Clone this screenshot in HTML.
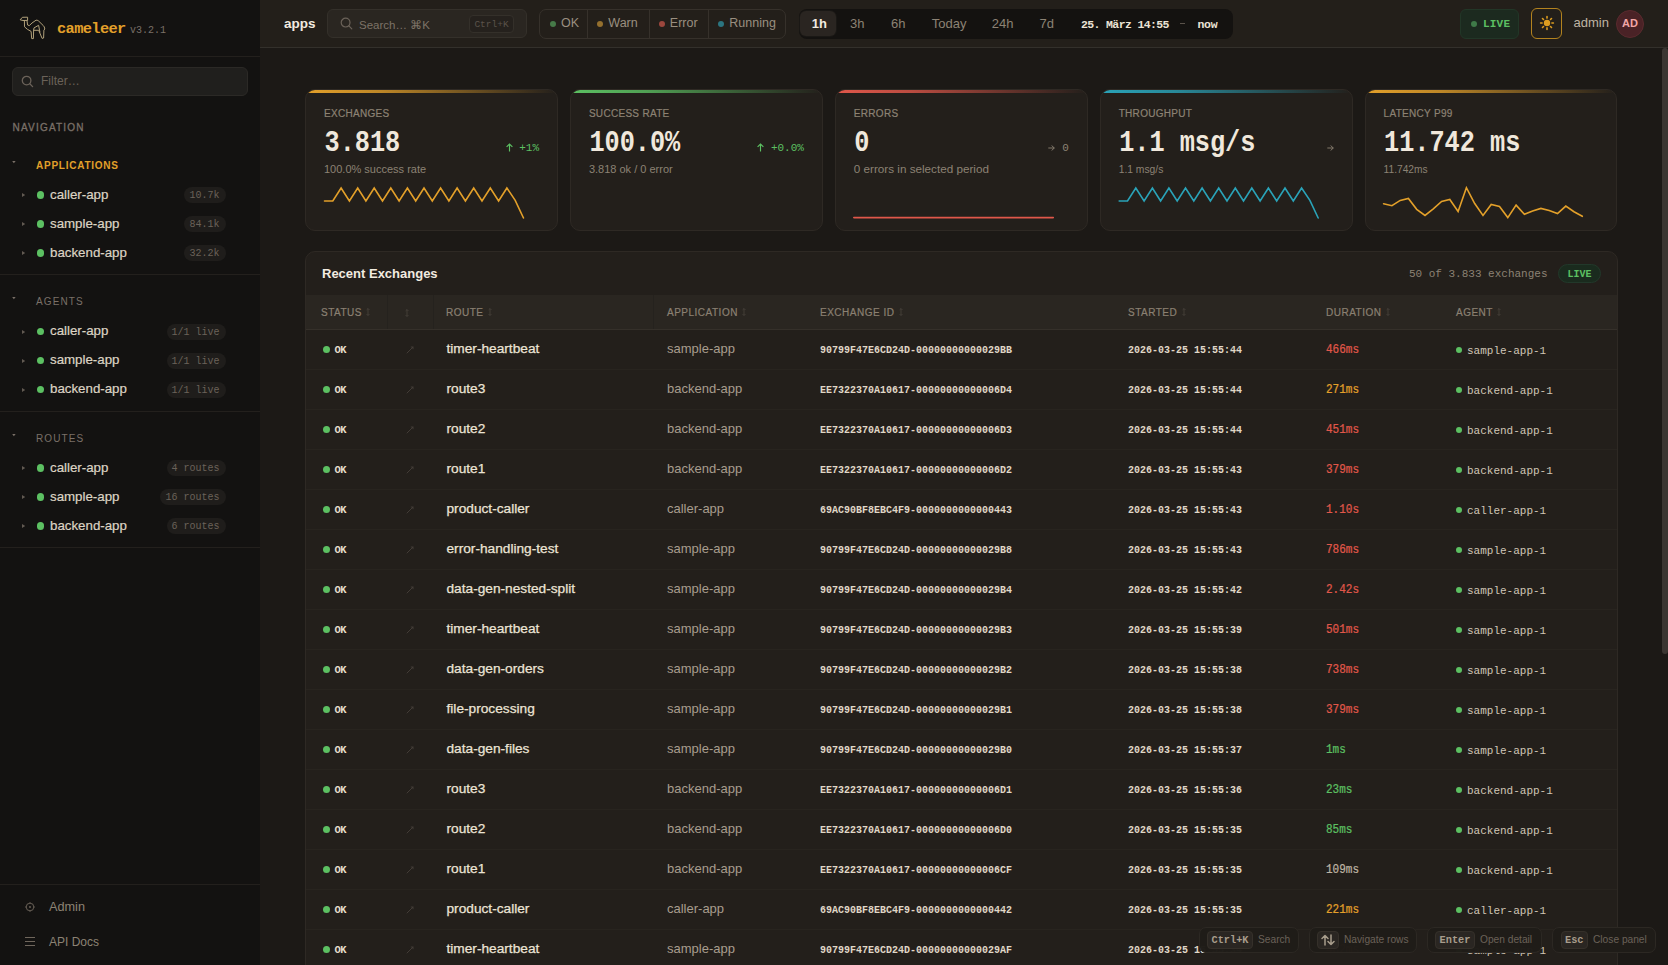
<!DOCTYPE html>
<html><head><meta charset="utf-8"><title>cameleer</title>
<style>
html,body{margin:0;padding:0;width:1668px;height:965px;overflow:hidden;background:#1c1916;}
.r,.t{position:absolute;}
.t{white-space:nowrap;}
.card{background:#231f1b;border:1px solid #2e2924;border-radius:10px;box-sizing:border-box;overflow:hidden;}
.card .bar{position:absolute;left:0;top:0;right:0;height:3px;}
</style></head><body>
<div class="r" style="left:0px;top:0px;width:260px;height:965px;background:#131211;"></div>
<svg class="r" style="left:16px;top:14px" width="34" height="28" viewBox="16 14 34 28" fill="none" stroke="#b8a880" stroke-width="0.95" stroke-linejoin="round" stroke-linecap="round">
<path d="M20.4 19.5 L22.4 17.3 L27.6 17.2 L27.6 20.4 L23.4 20.5 Z"/>
<path d="M24.4 20.6 L24.5 26.8 Q27 29.5 31.1 31.4 L31.7 38.6 L33.4 38.6 L33.6 30.3 L38.7 30.3 L42.1 38.4 L43.6 38 L43.9 30.2 L44.8 29 Q44.5 26.5 43.3 25.6 L38.6 21 Q37 19.8 36 20.2 L32 23 L29.3 25.6 L27.6 25 L27 20.5"/>
<path d="M33.6 30.3 L34 27.9 L38.6 25.3 L39.9 32"/>
</svg>
<div class="t" style="top:18.93px;font-size:15.3px;line-height:20px;color:#e3a02a;font-weight:700;font-family:'Liberation Mono', monospace;letter-spacing:-0.6px;left:57px;">cameleer</div>
<div class="t" style="top:23.84px;font-size:10px;line-height:13px;color:#7a7068;font-weight:400;font-family:'Liberation Mono', monospace;left:130px;">v3.2.1</div>
<div class="r" style="left:0px;top:56px;width:260px;height:1px;background:#23201d;"></div>
<div class="r" style="left:12px;top:67px;width:236px;height:29px;background:#201f1d;border:1px solid #2b2926;box-sizing:border-box;border-radius:6px;"></div>
<svg class="r" style="left:21px;top:75px" width="13" height="13" viewBox="0 0 13 13" fill="none" stroke="#6b6259" stroke-width="1.3"><circle cx="5.6" cy="5.6" r="4.3"/><path d="M8.8 8.8 L11.6 11.6" stroke-linecap="round"/></svg>
<div class="t" style="top:72.84px;font-size:12px;line-height:16px;color:#6b6259;font-weight:400;font-family:'Liberation Sans', sans-serif;left:41px;">Filter&#8230;</div>
<div class="t" style="top:121.44px;font-size:10px;line-height:13px;color:#7a7068;font-weight:400;font-family:'Liberation Sans', sans-serif;letter-spacing:1.2px;left:12.5px;-webkit-text-stroke:0.3px #7a7068;">NAVIGATION</div>
<svg class="r" style="left:12.2px;top:160.7px" width="4" height="3" viewBox="0 0 4 3"><path d="M0.2 0 L3.6 0 L1.9 2.2 Z" fill="#7a7068"/></svg>
<div class="t" style="top:159.03px;font-size:10px;line-height:13px;color:#e3a02a;font-weight:700;font-family:'Liberation Sans', sans-serif;letter-spacing:0.75px;left:36px;">APPLICATIONS</div>
<svg class="r" style="left:21.8px;top:193px" width="4" height="4" viewBox="0 0 4 4"><path d="M0 0 L3.2 2 L0 4 Z" fill="#625a52"/></svg>
<div class="r" style="left:36.5px;top:191.2px;width:7.6px;height:7.6px;background:#5cc062;border-radius:3.8px;"></div>
<div class="t" style="top:185.89px;font-size:13.3px;line-height:17px;color:#ddd4c4;font-weight:500;font-family:'Liberation Sans', sans-serif;left:50px;-webkit-text-stroke:0.2px #ddd4c4;">caller-app</div>
<div class="r" style="left:184px;top:187px;width:42px;height:16px;background:#1f1d1b;border-radius:8px;"></div>
<div class="t" style="top:189.34px;font-size:10px;line-height:13px;color:#6b6259;font-weight:400;font-family:'Liberation Mono', monospace;right:1448.5px;">10.7k</div>
<svg class="r" style="left:21.8px;top:222px" width="4" height="4" viewBox="0 0 4 4"><path d="M0 0 L3.2 2 L0 4 Z" fill="#625a52"/></svg>
<div class="r" style="left:36.5px;top:220.2px;width:7.6px;height:7.6px;background:#5cc062;border-radius:3.8px;"></div>
<div class="t" style="top:214.89px;font-size:13.3px;line-height:17px;color:#ddd4c4;font-weight:500;font-family:'Liberation Sans', sans-serif;left:50px;-webkit-text-stroke:0.2px #ddd4c4;">sample-app</div>
<div class="r" style="left:184px;top:216px;width:42px;height:16px;background:#1f1d1b;border-radius:8px;"></div>
<div class="t" style="top:218.34px;font-size:10px;line-height:13px;color:#6b6259;font-weight:400;font-family:'Liberation Mono', monospace;right:1448.5px;">84.1k</div>
<svg class="r" style="left:21.8px;top:251px" width="4" height="4" viewBox="0 0 4 4"><path d="M0 0 L3.2 2 L0 4 Z" fill="#625a52"/></svg>
<div class="r" style="left:36.5px;top:249.2px;width:7.6px;height:7.6px;background:#5cc062;border-radius:3.8px;"></div>
<div class="t" style="top:243.89px;font-size:13.3px;line-height:17px;color:#ddd4c4;font-weight:500;font-family:'Liberation Sans', sans-serif;left:50px;-webkit-text-stroke:0.2px #ddd4c4;">backend-app</div>
<div class="r" style="left:184px;top:245px;width:42px;height:16px;background:#1f1d1b;border-radius:8px;"></div>
<div class="t" style="top:247.34px;font-size:10px;line-height:13px;color:#6b6259;font-weight:400;font-family:'Liberation Mono', monospace;right:1448.5px;">32.2k</div>
<div class="r" style="left:0px;top:274px;width:260px;height:1px;background:#23201d;"></div>
<svg class="r" style="left:12.2px;top:296.9px" width="4" height="3" viewBox="0 0 4 3"><path d="M0.2 0 L3.6 0 L1.9 2.2 Z" fill="#7a7068"/></svg>
<div class="t" style="top:295.24px;font-size:10px;line-height:13px;color:#7a7068;font-weight:400;font-family:'Liberation Sans', sans-serif;letter-spacing:1.1px;left:36px;">AGENTS</div>
<svg class="r" style="left:21.8px;top:329.5px" width="4" height="4" viewBox="0 0 4 4"><path d="M0 0 L3.2 2 L0 4 Z" fill="#625a52"/></svg>
<div class="r" style="left:36.5px;top:327.7px;width:7.6px;height:7.6px;background:#5cc062;border-radius:3.8px;"></div>
<div class="t" style="top:322.39px;font-size:13.3px;line-height:17px;color:#ddd4c4;font-weight:500;font-family:'Liberation Sans', sans-serif;left:50px;-webkit-text-stroke:0.2px #ddd4c4;">caller-app</div>
<div class="r" style="left:167px;top:323.5px;width:59px;height:16px;background:#1f1d1b;border-radius:8px;"></div>
<div class="t" style="top:325.84px;font-size:10px;line-height:13px;color:#6b6259;font-weight:400;font-family:'Liberation Mono', monospace;right:1448.5px;">1/1 live</div>
<svg class="r" style="left:21.8px;top:358.5px" width="4" height="4" viewBox="0 0 4 4"><path d="M0 0 L3.2 2 L0 4 Z" fill="#625a52"/></svg>
<div class="r" style="left:36.5px;top:356.7px;width:7.6px;height:7.6px;background:#5cc062;border-radius:3.8px;"></div>
<div class="t" style="top:351.39px;font-size:13.3px;line-height:17px;color:#ddd4c4;font-weight:500;font-family:'Liberation Sans', sans-serif;left:50px;-webkit-text-stroke:0.2px #ddd4c4;">sample-app</div>
<div class="r" style="left:167px;top:352.5px;width:59px;height:16px;background:#1f1d1b;border-radius:8px;"></div>
<div class="t" style="top:354.84px;font-size:10px;line-height:13px;color:#6b6259;font-weight:400;font-family:'Liberation Mono', monospace;right:1448.5px;">1/1 live</div>
<svg class="r" style="left:21.8px;top:387.5px" width="4" height="4" viewBox="0 0 4 4"><path d="M0 0 L3.2 2 L0 4 Z" fill="#625a52"/></svg>
<div class="r" style="left:36.5px;top:385.7px;width:7.6px;height:7.6px;background:#5cc062;border-radius:3.8px;"></div>
<div class="t" style="top:380.39px;font-size:13.3px;line-height:17px;color:#ddd4c4;font-weight:500;font-family:'Liberation Sans', sans-serif;left:50px;-webkit-text-stroke:0.2px #ddd4c4;">backend-app</div>
<div class="r" style="left:167px;top:381.5px;width:59px;height:16px;background:#1f1d1b;border-radius:8px;"></div>
<div class="t" style="top:383.84px;font-size:10px;line-height:13px;color:#6b6259;font-weight:400;font-family:'Liberation Mono', monospace;right:1448.5px;">1/1 live</div>
<div class="r" style="left:0px;top:411px;width:260px;height:1px;background:#23201d;"></div>
<svg class="r" style="left:12.2px;top:434.0px" width="4" height="3" viewBox="0 0 4 3"><path d="M0.2 0 L3.6 0 L1.9 2.2 Z" fill="#7a7068"/></svg>
<div class="t" style="top:432.34px;font-size:10px;line-height:13px;color:#7a7068;font-weight:400;font-family:'Liberation Sans', sans-serif;letter-spacing:1.1px;left:36px;">ROUTES</div>
<svg class="r" style="left:21.8px;top:466px" width="4" height="4" viewBox="0 0 4 4"><path d="M0 0 L3.2 2 L0 4 Z" fill="#625a52"/></svg>
<div class="r" style="left:36.5px;top:464.2px;width:7.6px;height:7.6px;background:#5cc062;border-radius:3.8px;"></div>
<div class="t" style="top:458.89px;font-size:13.3px;line-height:17px;color:#ddd4c4;font-weight:500;font-family:'Liberation Sans', sans-serif;left:50px;-webkit-text-stroke:0.2px #ddd4c4;">caller-app</div>
<div class="r" style="left:167px;top:460px;width:59px;height:16px;background:#1f1d1b;border-radius:8px;"></div>
<div class="t" style="top:462.34px;font-size:10px;line-height:13px;color:#6b6259;font-weight:400;font-family:'Liberation Mono', monospace;right:1448.5px;">4 routes</div>
<svg class="r" style="left:21.8px;top:495px" width="4" height="4" viewBox="0 0 4 4"><path d="M0 0 L3.2 2 L0 4 Z" fill="#625a52"/></svg>
<div class="r" style="left:36.5px;top:493.2px;width:7.6px;height:7.6px;background:#5cc062;border-radius:3.8px;"></div>
<div class="t" style="top:487.89px;font-size:13.3px;line-height:17px;color:#ddd4c4;font-weight:500;font-family:'Liberation Sans', sans-serif;left:50px;-webkit-text-stroke:0.2px #ddd4c4;">sample-app</div>
<div class="r" style="left:160px;top:489px;width:66px;height:16px;background:#1f1d1b;border-radius:8px;"></div>
<div class="t" style="top:491.34px;font-size:10px;line-height:13px;color:#6b6259;font-weight:400;font-family:'Liberation Mono', monospace;right:1448.5px;">16 routes</div>
<svg class="r" style="left:21.8px;top:524px" width="4" height="4" viewBox="0 0 4 4"><path d="M0 0 L3.2 2 L0 4 Z" fill="#625a52"/></svg>
<div class="r" style="left:36.5px;top:522.2px;width:7.6px;height:7.6px;background:#5cc062;border-radius:3.8px;"></div>
<div class="t" style="top:516.89px;font-size:13.3px;line-height:17px;color:#ddd4c4;font-weight:500;font-family:'Liberation Sans', sans-serif;left:50px;-webkit-text-stroke:0.2px #ddd4c4;">backend-app</div>
<div class="r" style="left:167px;top:518px;width:59px;height:16px;background:#1f1d1b;border-radius:8px;"></div>
<div class="t" style="top:520.34px;font-size:10px;line-height:13px;color:#6b6259;font-weight:400;font-family:'Liberation Mono', monospace;right:1448.5px;">6 routes</div>
<div class="r" style="left:0px;top:547px;width:260px;height:1px;background:#23201d;"></div>
<div class="r" style="left:0px;top:884px;width:260px;height:1px;background:#23201d;"></div>
<svg class="r" style="left:24px;top:901px" width="12" height="12" viewBox="0 0 12 12" fill="none" stroke="#6f665c" stroke-width="0.9"><circle cx="6" cy="6" r="3.8"/><circle cx="6" cy="6" r="0.9" fill="#6f665c" stroke="none"/><path d="M6 1.2V2.2 M6 9.8V10.8 M1.2 6H2.2 M9.8 6H10.8"/></svg>
<div class="t" style="top:899.10px;font-size:12.7px;line-height:17px;color:#8c8274;font-weight:400;font-family:'Liberation Sans', sans-serif;left:49px;">Admin</div>
<svg class="r" style="left:25px;top:936px" width="10" height="11" viewBox="0 0 10 11" stroke="#6f665c" stroke-width="1"><path d="M0 1.5H10 M0 5.5H10 M0 9.5H10"/></svg>
<div class="t" style="top:933.64px;font-size:12px;line-height:16px;color:#8c8274;font-weight:400;font-family:'Liberation Sans', sans-serif;left:49px;">API Docs</div>
<div class="r" style="left:260px;top:0px;width:1408px;height:47px;background:#231f1a;"></div>
<div class="r" style="left:260px;top:47px;width:1408px;height:1px;background:#33302b;"></div>
<div class="t" style="top:14.62px;font-size:13.5px;line-height:18px;color:#f2ebe0;font-weight:700;font-family:'Liberation Sans', sans-serif;left:284px;">apps</div>
<div class="r" style="left:327px;top:9px;width:200px;height:29px;background:#2a2621;border:1px solid #34302a;box-sizing:border-box;border-radius:6px;"></div>
<svg class="r" style="left:340px;top:17px" width="13" height="13" viewBox="0 0 13 13" fill="none" stroke="#6b6259" stroke-width="1.2"><circle cx="5.6" cy="5.6" r="4.4"/><path d="M8.9 8.9 L11.8 11.8" stroke-linecap="round"/></svg>
<div class="t" style="top:17.82px;font-size:11.5px;line-height:15px;color:#7d7367;font-weight:400;font-family:'Liberation Sans', sans-serif;left:359px;">Search&#8230; &#8984;K</div>
<div class="r" style="left:469px;top:15px;width:45px;height:18px;background:#25211d;border:1px solid #34302a;box-sizing:border-box;border-radius:4px;"></div>
<div class="t" style="top:18.97px;font-size:9.5px;line-height:12px;color:#5a524a;font-weight:400;font-family:'Liberation Mono', monospace;right:1176.5px;left:469px;width:45px;text-align:center;">Ctrl+K</div>
<div class="r" style="left:539px;top:9px;width:247px;height:30px;background:none;border:1px solid #36312b;box-sizing:border-box;border-radius:7px;"></div>
<div class="r" style="left:587px;top:10px;width:1px;height:28px;background:#36312b;"></div>
<div class="r" style="left:649px;top:10px;width:1px;height:28px;background:#36312b;"></div>
<div class="r" style="left:708px;top:10px;width:1px;height:28px;background:#36312b;"></div>
<div class="r" style="left:549.7px;top:20.5px;width:6px;height:6px;background:#467a48;border-radius:3px;"></div>
<div class="t" style="top:15.17px;font-size:12.5px;line-height:16px;color:#9a8f80;font-weight:400;font-family:'Liberation Sans', sans-serif;left:561.0px;">OK</div>
<div class="r" style="left:597px;top:20.5px;width:6px;height:6px;background:#94702e;border-radius:3px;"></div>
<div class="t" style="top:15.17px;font-size:12.5px;line-height:16px;color:#9a8f80;font-weight:400;font-family:'Liberation Sans', sans-serif;left:608.3px;">Warn</div>
<div class="r" style="left:658.5px;top:20.5px;width:6px;height:6px;background:#9c473d;border-radius:3px;"></div>
<div class="t" style="top:15.17px;font-size:12.5px;line-height:16px;color:#9a8f80;font-weight:400;font-family:'Liberation Sans', sans-serif;left:669.8px;">Error</div>
<div class="r" style="left:718px;top:20.5px;width:6px;height:6px;background:#2b7580;border-radius:3px;"></div>
<div class="t" style="top:15.17px;font-size:12.5px;line-height:16px;color:#9a8f80;font-weight:400;font-family:'Liberation Sans', sans-serif;left:729.3px;">Running</div>
<div class="r" style="left:798.5px;top:9px;width:434px;height:30px;background:#141210;border-radius:8px;"></div>
<div class="r" style="left:799.5px;top:11px;width:36px;height:25px;background:#2a2521;border-radius:6px;box-shadow:0 0 0 1px #1a1815;"></div>
<div class="t" style="top:15.30px;font-size:13px;line-height:17px;color:#f2ebe0;font-weight:700;font-family:'Liberation Sans', sans-serif;left:811.8px;">1h</div>
<div class="t" style="top:15.30px;font-size:13px;line-height:17px;color:#8c8274;font-weight:400;font-family:'Liberation Sans', sans-serif;left:850px;">3h</div>
<div class="t" style="top:15.30px;font-size:13px;line-height:17px;color:#8c8274;font-weight:400;font-family:'Liberation Sans', sans-serif;left:891px;">6h</div>
<div class="t" style="top:15.30px;font-size:13px;line-height:17px;color:#8c8274;font-weight:400;font-family:'Liberation Sans', sans-serif;left:931.8px;">Today</div>
<div class="t" style="top:15.30px;font-size:13px;line-height:17px;color:#8c8274;font-weight:400;font-family:'Liberation Sans', sans-serif;left:991.8px;">24h</div>
<div class="t" style="top:15.30px;font-size:13px;line-height:17px;color:#8c8274;font-weight:400;font-family:'Liberation Sans', sans-serif;left:1039.6px;">7d</div>
<div class="t" style="top:16.94px;font-size:11.5px;line-height:15px;color:#ece4d6;font-weight:700;font-family:'Liberation Mono', monospace;letter-spacing:-0.63px;left:1081px;">25. M&auml;rz 14:55</div>
<div class="r" style="left:1180px;top:23px;width:5px;height:1px;background:#5a524a;"></div>
<div class="t" style="top:16.94px;font-size:11.5px;line-height:15px;color:#ece4d6;font-weight:700;font-family:'Liberation Mono', monospace;letter-spacing:-0.3px;left:1197.5px;">now</div>
<div class="r" style="left:1460px;top:9px;width:59px;height:30px;background:#1c2a1f;border:1px solid #223627;box-sizing:border-box;border-radius:6px;"></div>
<div class="r" style="left:1470.5px;top:20.5px;width:6px;height:6px;background:#3f7a48;border-radius:3px;"></div>
<div class="t" style="top:17.27px;font-size:11px;line-height:14px;color:#5cc062;font-weight:700;font-family:'Liberation Mono', monospace;letter-spacing:0.2px;left:1483px;">LIVE</div>
<div class="r" style="left:1531px;top:8px;width:31px;height:31px;background:none;border:1px solid #b3831f;box-sizing:border-box;border-radius:6px;"></div>
<svg class="r" style="left:1537.7px;top:14.2px" width="18" height="18" viewBox="-9 -9 18 18"><circle cx="0" cy="0" r="3.2" fill="#dd9d20"/><g stroke="#dd9d20" stroke-width="1.6" stroke-linecap="round"><path d="M0 -4.9V-6.4 M0 4.9V6.4 M-4.9 0H-6.4 M4.9 0H6.4 M-3.5 -3.5L-4.5 -4.5 M3.5 3.5L4.5 4.5 M-3.5 3.5L-4.5 4.5 M3.5 -3.5L4.5 -4.5"/></g></svg>
<div class="t" style="top:14.00px;font-size:13px;line-height:17px;color:#bfb4a4;font-weight:400;font-family:'Liberation Sans', sans-serif;left:1573.5px;">admin</div>
<div class="r" style="left:1616px;top:9.5px;width:28px;height:28px;background:#4a2226;border-radius:14px;border:1px solid #5a2a2e;box-sizing:border-box;"></div>
<div class="t" style="top:16.39px;font-size:11px;line-height:14px;color:#f2a6a6;font-weight:700;font-family:'Liberation Sans', sans-serif;right:38px;left:1616px;width:28px;text-align:center;">AD</div>
<div class="r" style="left:260px;top:48px;width:1402px;height:917px;background:#1c1916;"></div>
<div class="r" style="left:1662px;top:48px;width:6px;height:606px;background:#3b3632;border-radius:3px;"></div>
<div class="r card" style="left:305.0px;top:89px;width:252.9px;height:142px;"><div class="bar" style="background:linear-gradient(90deg,#e3a02a 0%,#e3a02acc 30%,#e3a02a00 100%);"></div></div>
<div class="t" style="top:107.33px;font-size:10px;line-height:13px;color:#8c8274;font-weight:500;font-family:'Liberation Sans', sans-serif;letter-spacing:0.3px;left:324.0px;-webkit-text-stroke:0.2px #8c8274;">EXCHANGES</div>
<div class="t" style="top:128.17px;font-size:25.3px;line-height:33px;color:#f0e8dc;font-weight:700;font-family:'Liberation Mono', monospace;letter-spacing:-0.05px;left:324.5px;transform:scaleY(1.14);transform-origin:0 23.23px;">3.818</div>
<div class="t" style="top:141.07px;font-size:11px;line-height:14px;color:#5cc062;font-weight:400;font-family:'Liberation Mono', monospace;right:1129.0px;"><svg width="7" height="9" viewBox="0 0 7 9" style="vertical-align:-0.5px;margin-right:6.5px"><path d="M3.5 8.5V1 M0.6 3.9L3.5 1L6.4 3.9" fill="none" stroke="currentColor" stroke-width="1.15"/></svg>+1%</div>
<div class="t" style="top:162.19px;font-size:11px;line-height:14px;color:#8c8274;font-weight:400;font-family:'Liberation Sans', sans-serif;left:324.0px;">100.0% success rate</div>
<svg class="r" style="left:0;top:0" width="1668" height="965"><polyline points="324.5,201 332.8,201 341.1,188 349.4,201 357.7,188 365.9,201 374.2,188 382.5,201 390.8,188 399.1,201 407.4,188 415.7,201 424.0,188 432.3,201 440.6,188 448.9,201 457.1,188 465.4,201 473.7,188 482.0,201 490.3,188 498.6,201 506.9,188 515.2,200.3 523.5,218" fill="none" stroke="#e3a02a" stroke-width="1.6" stroke-linejoin="miter" stroke-linecap="round"/></svg>
<div class="r card" style="left:569.9px;top:89px;width:252.9px;height:142px;"><div class="bar" style="background:linear-gradient(90deg,#5cc062 0%,#5cc062cc 30%,#5cc06200 100%);"></div></div>
<div class="t" style="top:107.33px;font-size:10px;line-height:13px;color:#8c8274;font-weight:500;font-family:'Liberation Sans', sans-serif;letter-spacing:0.3px;left:588.9px;-webkit-text-stroke:0.2px #8c8274;">SUCCESS RATE</div>
<div class="t" style="top:128.17px;font-size:25.3px;line-height:33px;color:#f0e8dc;font-weight:700;font-family:'Liberation Mono', monospace;letter-spacing:-0.05px;left:589.4px;transform:scaleY(1.14);transform-origin:0 23.23px;">100.0%</div>
<div class="t" style="top:141.07px;font-size:11px;line-height:14px;color:#5cc062;font-weight:400;font-family:'Liberation Mono', monospace;right:864.1px;"><svg width="7" height="9" viewBox="0 0 7 9" style="vertical-align:-0.5px;margin-right:6.5px"><path d="M3.5 8.5V1 M0.6 3.9L3.5 1L6.4 3.9" fill="none" stroke="currentColor" stroke-width="1.15"/></svg>+0.0%</div>
<div class="t" style="top:162.19px;font-size:11px;line-height:14px;color:#8c8274;font-weight:400;font-family:'Liberation Sans', sans-serif;left:588.9px;">3.818 ok / 0 error</div>
<div class="r card" style="left:834.8px;top:89px;width:252.9px;height:142px;"><div class="bar" style="background:linear-gradient(90deg,#e0574a 0%,#e0574acc 30%,#e0574a00 100%);"></div></div>
<div class="t" style="top:107.33px;font-size:10px;line-height:13px;color:#8c8274;font-weight:500;font-family:'Liberation Sans', sans-serif;letter-spacing:0.3px;left:853.8px;-webkit-text-stroke:0.2px #8c8274;">ERRORS</div>
<div class="t" style="top:128.17px;font-size:25.3px;line-height:33px;color:#f0e8dc;font-weight:700;font-family:'Liberation Mono', monospace;letter-spacing:-0.05px;left:854.3px;transform:scaleY(1.14);transform-origin:0 23.23px;">0</div>
<div class="t" style="top:141.07px;font-size:11px;line-height:14px;color:#8c8274;font-weight:400;font-family:'Liberation Mono', monospace;right:599.2px;"><svg width="7" height="6" viewBox="0 0 7 6" style="vertical-align:0.5px;margin-right:7px"><path d="M0.3 3H6.3 M3.6 0.5L6.3 3L3.6 5.5" fill="none" stroke="currentColor" stroke-width="0.9"/></svg>0</div>
<div class="t" style="top:161.45px;font-size:11.7px;line-height:15px;color:#8c8274;font-weight:400;font-family:'Liberation Sans', sans-serif;left:853.8px;">0 errors in selected period</div>
<svg class="r" style="left:0;top:0" width="1668" height="965"><polyline points="853.8,217.6 1053.3,217.6" fill="none" stroke="#e0574a" stroke-width="1.6" stroke-linejoin="miter" stroke-linecap="round"/></svg>
<div class="r card" style="left:1099.7px;top:89px;width:252.9px;height:142px;"><div class="bar" style="background:linear-gradient(90deg,#2aa3b8 0%,#2aa3b8cc 30%,#2aa3b800 100%);"></div></div>
<div class="t" style="top:107.33px;font-size:10px;line-height:13px;color:#8c8274;font-weight:500;font-family:'Liberation Sans', sans-serif;letter-spacing:0.3px;left:1118.6999999999998px;-webkit-text-stroke:0.2px #8c8274;">THROUGHPUT</div>
<div class="t" style="top:128.17px;font-size:25.3px;line-height:33px;color:#f0e8dc;font-weight:700;font-family:'Liberation Mono', monospace;letter-spacing:-0.05px;left:1119.1999999999998px;transform:scaleY(1.14);transform-origin:0 23.23px;">1.1 msg/s</div>
<div class="t" style="top:141.07px;font-size:11px;line-height:14px;color:#8c8274;font-weight:400;font-family:'Liberation Mono', monospace;right:334.3000000000002px;"><svg width="7" height="6" viewBox="0 0 7 6" style="vertical-align:0.5px;margin-right:0"><path d="M0.3 3H6.3 M3.6 0.5L6.3 3L3.6 5.5" fill="none" stroke="currentColor" stroke-width="0.9"/></svg></div>
<div class="t" style="top:162.93px;font-size:10.3px;line-height:13px;color:#8c8274;font-weight:400;font-family:'Liberation Sans', sans-serif;left:1118.6999999999998px;">1.1 msg/s</div>
<svg class="r" style="left:0;top:0" width="1668" height="965"><polyline points="1119.2,201 1127.5,201 1135.8,188 1144.1,201 1152.4,188 1160.6,201 1168.9,188 1177.2,201 1185.5,188 1193.8,201 1202.1,188 1210.4,201 1218.7,188 1227.0,201 1235.3,188 1243.5,201 1251.8,188 1260.1,201 1268.4,188 1276.7,201 1285.0,188 1293.3,201 1301.6,188 1309.9,200.3 1318.2,218" fill="none" stroke="#2aa3b8" stroke-width="1.6" stroke-linejoin="miter" stroke-linecap="round"/></svg>
<div class="r card" style="left:1364.6px;top:89px;width:252.9px;height:142px;"><div class="bar" style="background:linear-gradient(90deg,#e3a02a 0%,#e3a02acc 30%,#e3a02a00 100%);"></div></div>
<div class="t" style="top:107.33px;font-size:10px;line-height:13px;color:#8c8274;font-weight:500;font-family:'Liberation Sans', sans-serif;letter-spacing:0.3px;left:1383.6px;-webkit-text-stroke:0.2px #8c8274;">LATENCY P99</div>
<div class="t" style="top:128.17px;font-size:25.3px;line-height:33px;color:#f0e8dc;font-weight:700;font-family:'Liberation Mono', monospace;letter-spacing:-0.05px;left:1384.1px;transform:scaleY(1.14);transform-origin:0 23.23px;">11.742 ms</div>
<div class="t" style="top:162.97px;font-size:10.2px;line-height:13px;color:#8c8274;font-weight:400;font-family:'Liberation Sans', sans-serif;left:1383.6px;">11.742ms</div>
<svg class="r" style="left:0;top:0" width="1668" height="965"><polyline points="1383.6,203.7 1391.9,205.7 1400.2,200.4 1408.4,198.5 1416.7,209.3 1425.0,215.4 1433.3,208.8 1441.6,201.4 1449.8,199.5 1458.1,211.4 1466.4,187.7 1474.7,203.5 1483.0,215.4 1491.2,204.4 1499.5,206.4 1507.8,217.6 1516.1,205.1 1524.4,214.3 1532.6,211 1540.9,208.4 1549.2,210.6 1557.5,213.6 1565.8,206.1 1574.0,211.7 1582.3,216.3" fill="none" stroke="#e3a02a" stroke-width="1.6" stroke-linejoin="miter" stroke-linecap="round"/></svg>
<div class="r" style="left:305px;top:251px;width:1313px;height:760px;background:#231f1b;border:1px solid #2e2924;border-radius:10px;box-sizing:border-box;"></div>
<div class="t" style="top:265.00px;font-size:13px;line-height:17px;color:#f2ebe0;font-weight:700;font-family:'Liberation Sans', sans-serif;left:322px;">Recent Exchanges</div>
<div class="t" style="top:266.87px;font-size:11px;line-height:14px;color:#8c8274;font-weight:400;font-family:'Liberation Mono', monospace;right:120.5px;">50 of 3.833 exchanges</div>
<div class="r" style="left:1558px;top:264px;width:43px;height:19px;background:#1a2b1e;border:1px solid #22382a;box-sizing:border-box;border-radius:10px;"></div>
<div class="t" style="top:267.64px;font-size:10px;line-height:13px;color:#5cc062;font-weight:700;font-family:'Liberation Mono', monospace;right:88.5px;left:1558px;width:43px;text-align:center;">LIVE</div>
<div class="r" style="left:306px;top:295px;width:1311px;height:34px;background:#2a2621;"></div>
<div class="r" style="left:306px;top:329px;width:1311px;height:1px;background:#35302a;"></div>
<div class="r" style="left:387px;top:295px;width:1px;height:34px;background:#25221e;"></div>
<div class="r" style="left:433px;top:295px;width:1px;height:34px;background:#25221e;"></div>
<div class="r" style="left:653px;top:295px;width:1px;height:34px;background:#25221e;"></div>
<div class="t" style="top:305.74px;font-size:10px;line-height:13px;color:#8a8072;font-weight:400;font-family:'Liberation Sans', sans-serif;letter-spacing:0.5px;left:321px;-webkit-text-stroke:0.2px #8a8072;">STATUS<svg width="4" height="8" viewBox="0 0 4 8" style="margin-left:4.5px;vertical-align:-0.5px"><path d="M2 0.5V7.5 M0.6 1.9L2 0.5L3.4 1.9 M0.6 6.1L2 7.5L3.4 6.1" stroke="#4a443d" stroke-width="0.8" fill="none"/></svg></div>
<svg class="r" style="left:405px;top:309px" width="4" height="8" viewBox="0 0 4 8"><path d="M2 0.5V7.5 M0.6 1.9L2 0.5L3.4 1.9 M0.6 6.1L2 7.5L3.4 6.1" stroke="#4a443d" stroke-width="0.8" fill="none"/></svg>
<div class="t" style="top:305.74px;font-size:10px;line-height:13px;color:#8a8072;font-weight:400;font-family:'Liberation Sans', sans-serif;letter-spacing:0.5px;left:446px;-webkit-text-stroke:0.2px #8a8072;">ROUTE<svg width="4" height="8" viewBox="0 0 4 8" style="margin-left:4.5px;vertical-align:-0.5px"><path d="M2 0.5V7.5 M0.6 1.9L2 0.5L3.4 1.9 M0.6 6.1L2 7.5L3.4 6.1" stroke="#4a443d" stroke-width="0.8" fill="none"/></svg></div>
<div class="t" style="top:305.74px;font-size:10px;line-height:13px;color:#8a8072;font-weight:400;font-family:'Liberation Sans', sans-serif;letter-spacing:0.5px;left:667px;-webkit-text-stroke:0.2px #8a8072;">APPLICATION<svg width="4" height="8" viewBox="0 0 4 8" style="margin-left:4.5px;vertical-align:-0.5px"><path d="M2 0.5V7.5 M0.6 1.9L2 0.5L3.4 1.9 M0.6 6.1L2 7.5L3.4 6.1" stroke="#4a443d" stroke-width="0.8" fill="none"/></svg></div>
<div class="t" style="top:305.74px;font-size:10px;line-height:13px;color:#8a8072;font-weight:400;font-family:'Liberation Sans', sans-serif;letter-spacing:0.5px;left:820px;-webkit-text-stroke:0.2px #8a8072;">EXCHANGE ID<svg width="4" height="8" viewBox="0 0 4 8" style="margin-left:4.5px;vertical-align:-0.5px"><path d="M2 0.5V7.5 M0.6 1.9L2 0.5L3.4 1.9 M0.6 6.1L2 7.5L3.4 6.1" stroke="#4a443d" stroke-width="0.8" fill="none"/></svg></div>
<div class="t" style="top:305.74px;font-size:10px;line-height:13px;color:#8a8072;font-weight:400;font-family:'Liberation Sans', sans-serif;letter-spacing:0.5px;left:1128px;-webkit-text-stroke:0.2px #8a8072;">STARTED<svg width="4" height="8" viewBox="0 0 4 8" style="margin-left:4.5px;vertical-align:-0.5px"><path d="M2 0.5V7.5 M0.6 1.9L2 0.5L3.4 1.9 M0.6 6.1L2 7.5L3.4 6.1" stroke="#4a443d" stroke-width="0.8" fill="none"/></svg></div>
<div class="t" style="top:305.74px;font-size:10px;line-height:13px;color:#8a8072;font-weight:400;font-family:'Liberation Sans', sans-serif;letter-spacing:0.5px;left:1326px;-webkit-text-stroke:0.2px #8a8072;">DURATION<svg width="4" height="8" viewBox="0 0 4 8" style="margin-left:4.5px;vertical-align:-0.5px"><path d="M2 0.5V7.5 M0.6 1.9L2 0.5L3.4 1.9 M0.6 6.1L2 7.5L3.4 6.1" stroke="#4a443d" stroke-width="0.8" fill="none"/></svg></div>
<div class="t" style="top:305.74px;font-size:10px;line-height:13px;color:#8a8072;font-weight:400;font-family:'Liberation Sans', sans-serif;letter-spacing:0.5px;left:1456px;-webkit-text-stroke:0.2px #8a8072;">AGENT<svg width="4" height="8" viewBox="0 0 4 8" style="margin-left:4.5px;vertical-align:-0.5px"><path d="M2 0.5V7.5 M0.6 1.9L2 0.5L3.4 1.9 M0.6 6.1L2 7.5L3.4 6.1" stroke="#4a443d" stroke-width="0.8" fill="none"/></svg></div>
<div class="r" style="left:306px;top:369.0px;width:1311px;height:1px;background:#28241f;"></div>
<div class="r" style="left:322.5px;top:346.0px;width:7px;height:7px;background:#5cc062;border-radius:3.5px;"></div>
<div class="t" style="top:343.21px;font-size:10.5px;line-height:14px;color:#e6dece;font-weight:700;font-family:'Liberation Mono', monospace;letter-spacing:-0.5px;left:334.5px;transform:scaleY(1.1);transform-origin:0 9.79px;">OK</div>
<svg class="r" style="left:406px;top:345.5px" width="8" height="8" viewBox="0 0 8 8" stroke="#46403a" stroke-width="0.9" stroke-linecap="round"><path d="M1 7L7 1 M5.2 1H7V2.8" fill="none"/></svg>
<div class="t" style="top:340.25px;font-size:13.7px;line-height:18px;color:#ece4d6;font-weight:500;font-family:'Liberation Sans', sans-serif;left:446.5px;-webkit-text-stroke:0.25px #ece4d6;">timer-heartbeat</div>
<div class="t" style="top:340.00px;font-size:13px;line-height:17px;color:#a89d8e;font-weight:400;font-family:'Liberation Sans', sans-serif;left:667px;">sample-app</div>
<div class="t" style="top:343.84px;font-size:10px;line-height:13px;color:#e0d8c8;font-weight:700;font-family:'Liberation Mono', monospace;left:820px;transform:scaleY(1.1);transform-origin:0 9.16px;">90799F47E6CD24D-00000000000029BB</div>
<div class="t" style="top:343.84px;font-size:10px;line-height:13px;color:#e0d8c8;font-weight:700;font-family:'Liberation Mono', monospace;left:1128px;transform:scaleY(1.1);transform-origin:0 9.16px;">2026-03-25 15:55:44</div>
<div class="t" style="top:343.07px;font-size:11px;line-height:14px;color:#e0574a;font-weight:400;font-family:'Liberation Mono', monospace;left:1326px;-webkit-text-stroke:0.2px #e0574a;transform:scaleY(1.1);transform-origin:0 9.93px;">466ms</div>
<div class="r" style="left:1456px;top:347.0px;width:6px;height:6px;background:#5cc062;border-radius:3px;"></div>
<div class="t" style="top:343.57px;font-size:11px;line-height:14px;color:#d0c6b6;font-weight:400;font-family:'Liberation Mono', monospace;left:1467px;">sample-app-1</div>
<div class="r" style="left:306px;top:409.0px;width:1311px;height:1px;background:#28241f;"></div>
<div class="r" style="left:322.5px;top:386.0px;width:7px;height:7px;background:#5cc062;border-radius:3.5px;"></div>
<div class="t" style="top:383.21px;font-size:10.5px;line-height:14px;color:#e6dece;font-weight:700;font-family:'Liberation Mono', monospace;letter-spacing:-0.5px;left:334.5px;transform:scaleY(1.1);transform-origin:0 9.79px;">OK</div>
<svg class="r" style="left:406px;top:385.5px" width="8" height="8" viewBox="0 0 8 8" stroke="#46403a" stroke-width="0.9" stroke-linecap="round"><path d="M1 7L7 1 M5.2 1H7V2.8" fill="none"/></svg>
<div class="t" style="top:380.25px;font-size:13.7px;line-height:18px;color:#ece4d6;font-weight:500;font-family:'Liberation Sans', sans-serif;left:446.5px;-webkit-text-stroke:0.25px #ece4d6;">route3</div>
<div class="t" style="top:380.00px;font-size:13px;line-height:17px;color:#a89d8e;font-weight:400;font-family:'Liberation Sans', sans-serif;left:667px;">backend-app</div>
<div class="t" style="top:383.84px;font-size:10px;line-height:13px;color:#e0d8c8;font-weight:700;font-family:'Liberation Mono', monospace;left:820px;transform:scaleY(1.1);transform-origin:0 9.16px;">EE7322370A10617-00000000000006D4</div>
<div class="t" style="top:383.84px;font-size:10px;line-height:13px;color:#e0d8c8;font-weight:700;font-family:'Liberation Mono', monospace;left:1128px;transform:scaleY(1.1);transform-origin:0 9.16px;">2026-03-25 15:55:44</div>
<div class="t" style="top:383.07px;font-size:11px;line-height:14px;color:#e3a02a;font-weight:400;font-family:'Liberation Mono', monospace;left:1326px;-webkit-text-stroke:0.2px #e3a02a;transform:scaleY(1.1);transform-origin:0 9.93px;">271ms</div>
<div class="r" style="left:1456px;top:387.0px;width:6px;height:6px;background:#5cc062;border-radius:3px;"></div>
<div class="t" style="top:383.57px;font-size:11px;line-height:14px;color:#d0c6b6;font-weight:400;font-family:'Liberation Mono', monospace;left:1467px;">backend-app-1</div>
<div class="r" style="left:306px;top:449.0px;width:1311px;height:1px;background:#28241f;"></div>
<div class="r" style="left:322.5px;top:426.0px;width:7px;height:7px;background:#5cc062;border-radius:3.5px;"></div>
<div class="t" style="top:423.21px;font-size:10.5px;line-height:14px;color:#e6dece;font-weight:700;font-family:'Liberation Mono', monospace;letter-spacing:-0.5px;left:334.5px;transform:scaleY(1.1);transform-origin:0 9.79px;">OK</div>
<svg class="r" style="left:406px;top:425.5px" width="8" height="8" viewBox="0 0 8 8" stroke="#46403a" stroke-width="0.9" stroke-linecap="round"><path d="M1 7L7 1 M5.2 1H7V2.8" fill="none"/></svg>
<div class="t" style="top:420.25px;font-size:13.7px;line-height:18px;color:#ece4d6;font-weight:500;font-family:'Liberation Sans', sans-serif;left:446.5px;-webkit-text-stroke:0.25px #ece4d6;">route2</div>
<div class="t" style="top:420.00px;font-size:13px;line-height:17px;color:#a89d8e;font-weight:400;font-family:'Liberation Sans', sans-serif;left:667px;">backend-app</div>
<div class="t" style="top:423.84px;font-size:10px;line-height:13px;color:#e0d8c8;font-weight:700;font-family:'Liberation Mono', monospace;left:820px;transform:scaleY(1.1);transform-origin:0 9.16px;">EE7322370A10617-00000000000006D3</div>
<div class="t" style="top:423.84px;font-size:10px;line-height:13px;color:#e0d8c8;font-weight:700;font-family:'Liberation Mono', monospace;left:1128px;transform:scaleY(1.1);transform-origin:0 9.16px;">2026-03-25 15:55:44</div>
<div class="t" style="top:423.07px;font-size:11px;line-height:14px;color:#e0574a;font-weight:400;font-family:'Liberation Mono', monospace;left:1326px;-webkit-text-stroke:0.2px #e0574a;transform:scaleY(1.1);transform-origin:0 9.93px;">451ms</div>
<div class="r" style="left:1456px;top:427.0px;width:6px;height:6px;background:#5cc062;border-radius:3px;"></div>
<div class="t" style="top:423.57px;font-size:11px;line-height:14px;color:#d0c6b6;font-weight:400;font-family:'Liberation Mono', monospace;left:1467px;">backend-app-1</div>
<div class="r" style="left:306px;top:489.0px;width:1311px;height:1px;background:#28241f;"></div>
<div class="r" style="left:322.5px;top:466.0px;width:7px;height:7px;background:#5cc062;border-radius:3.5px;"></div>
<div class="t" style="top:463.21px;font-size:10.5px;line-height:14px;color:#e6dece;font-weight:700;font-family:'Liberation Mono', monospace;letter-spacing:-0.5px;left:334.5px;transform:scaleY(1.1);transform-origin:0 9.79px;">OK</div>
<svg class="r" style="left:406px;top:465.5px" width="8" height="8" viewBox="0 0 8 8" stroke="#46403a" stroke-width="0.9" stroke-linecap="round"><path d="M1 7L7 1 M5.2 1H7V2.8" fill="none"/></svg>
<div class="t" style="top:460.25px;font-size:13.7px;line-height:18px;color:#ece4d6;font-weight:500;font-family:'Liberation Sans', sans-serif;left:446.5px;-webkit-text-stroke:0.25px #ece4d6;">route1</div>
<div class="t" style="top:460.00px;font-size:13px;line-height:17px;color:#a89d8e;font-weight:400;font-family:'Liberation Sans', sans-serif;left:667px;">backend-app</div>
<div class="t" style="top:463.84px;font-size:10px;line-height:13px;color:#e0d8c8;font-weight:700;font-family:'Liberation Mono', monospace;left:820px;transform:scaleY(1.1);transform-origin:0 9.16px;">EE7322370A10617-00000000000006D2</div>
<div class="t" style="top:463.84px;font-size:10px;line-height:13px;color:#e0d8c8;font-weight:700;font-family:'Liberation Mono', monospace;left:1128px;transform:scaleY(1.1);transform-origin:0 9.16px;">2026-03-25 15:55:43</div>
<div class="t" style="top:463.07px;font-size:11px;line-height:14px;color:#e0574a;font-weight:400;font-family:'Liberation Mono', monospace;left:1326px;-webkit-text-stroke:0.2px #e0574a;transform:scaleY(1.1);transform-origin:0 9.93px;">379ms</div>
<div class="r" style="left:1456px;top:467.0px;width:6px;height:6px;background:#5cc062;border-radius:3px;"></div>
<div class="t" style="top:463.57px;font-size:11px;line-height:14px;color:#d0c6b6;font-weight:400;font-family:'Liberation Mono', monospace;left:1467px;">backend-app-1</div>
<div class="r" style="left:306px;top:529.0px;width:1311px;height:1px;background:#28241f;"></div>
<div class="r" style="left:322.5px;top:506.0px;width:7px;height:7px;background:#5cc062;border-radius:3.5px;"></div>
<div class="t" style="top:503.21px;font-size:10.5px;line-height:14px;color:#e6dece;font-weight:700;font-family:'Liberation Mono', monospace;letter-spacing:-0.5px;left:334.5px;transform:scaleY(1.1);transform-origin:0 9.79px;">OK</div>
<svg class="r" style="left:406px;top:505.5px" width="8" height="8" viewBox="0 0 8 8" stroke="#46403a" stroke-width="0.9" stroke-linecap="round"><path d="M1 7L7 1 M5.2 1H7V2.8" fill="none"/></svg>
<div class="t" style="top:500.25px;font-size:13.7px;line-height:18px;color:#ece4d6;font-weight:500;font-family:'Liberation Sans', sans-serif;left:446.5px;-webkit-text-stroke:0.25px #ece4d6;">product-caller</div>
<div class="t" style="top:500.00px;font-size:13px;line-height:17px;color:#a89d8e;font-weight:400;font-family:'Liberation Sans', sans-serif;left:667px;">caller-app</div>
<div class="t" style="top:503.84px;font-size:10px;line-height:13px;color:#e0d8c8;font-weight:700;font-family:'Liberation Mono', monospace;left:820px;transform:scaleY(1.1);transform-origin:0 9.16px;">69AC90BF8EBC4F9-0000000000000443</div>
<div class="t" style="top:503.84px;font-size:10px;line-height:13px;color:#e0d8c8;font-weight:700;font-family:'Liberation Mono', monospace;left:1128px;transform:scaleY(1.1);transform-origin:0 9.16px;">2026-03-25 15:55:43</div>
<div class="t" style="top:503.07px;font-size:11px;line-height:14px;color:#e0574a;font-weight:400;font-family:'Liberation Mono', monospace;left:1326px;-webkit-text-stroke:0.2px #e0574a;transform:scaleY(1.1);transform-origin:0 9.93px;">1.10s</div>
<div class="r" style="left:1456px;top:507.0px;width:6px;height:6px;background:#5cc062;border-radius:3px;"></div>
<div class="t" style="top:503.57px;font-size:11px;line-height:14px;color:#d0c6b6;font-weight:400;font-family:'Liberation Mono', monospace;left:1467px;">caller-app-1</div>
<div class="r" style="left:306px;top:569.0px;width:1311px;height:1px;background:#28241f;"></div>
<div class="r" style="left:322.5px;top:546.0px;width:7px;height:7px;background:#5cc062;border-radius:3.5px;"></div>
<div class="t" style="top:543.21px;font-size:10.5px;line-height:14px;color:#e6dece;font-weight:700;font-family:'Liberation Mono', monospace;letter-spacing:-0.5px;left:334.5px;transform:scaleY(1.1);transform-origin:0 9.79px;">OK</div>
<svg class="r" style="left:406px;top:545.5px" width="8" height="8" viewBox="0 0 8 8" stroke="#46403a" stroke-width="0.9" stroke-linecap="round"><path d="M1 7L7 1 M5.2 1H7V2.8" fill="none"/></svg>
<div class="t" style="top:540.25px;font-size:13.7px;line-height:18px;color:#ece4d6;font-weight:500;font-family:'Liberation Sans', sans-serif;left:446.5px;-webkit-text-stroke:0.25px #ece4d6;">error-handling-test</div>
<div class="t" style="top:540.00px;font-size:13px;line-height:17px;color:#a89d8e;font-weight:400;font-family:'Liberation Sans', sans-serif;left:667px;">sample-app</div>
<div class="t" style="top:543.84px;font-size:10px;line-height:13px;color:#e0d8c8;font-weight:700;font-family:'Liberation Mono', monospace;left:820px;transform:scaleY(1.1);transform-origin:0 9.16px;">90799F47E6CD24D-00000000000029B8</div>
<div class="t" style="top:543.84px;font-size:10px;line-height:13px;color:#e0d8c8;font-weight:700;font-family:'Liberation Mono', monospace;left:1128px;transform:scaleY(1.1);transform-origin:0 9.16px;">2026-03-25 15:55:43</div>
<div class="t" style="top:543.07px;font-size:11px;line-height:14px;color:#e0574a;font-weight:400;font-family:'Liberation Mono', monospace;left:1326px;-webkit-text-stroke:0.2px #e0574a;transform:scaleY(1.1);transform-origin:0 9.93px;">786ms</div>
<div class="r" style="left:1456px;top:547.0px;width:6px;height:6px;background:#5cc062;border-radius:3px;"></div>
<div class="t" style="top:543.57px;font-size:11px;line-height:14px;color:#d0c6b6;font-weight:400;font-family:'Liberation Mono', monospace;left:1467px;">sample-app-1</div>
<div class="r" style="left:306px;top:609.0px;width:1311px;height:1px;background:#28241f;"></div>
<div class="r" style="left:322.5px;top:586.0px;width:7px;height:7px;background:#5cc062;border-radius:3.5px;"></div>
<div class="t" style="top:583.21px;font-size:10.5px;line-height:14px;color:#e6dece;font-weight:700;font-family:'Liberation Mono', monospace;letter-spacing:-0.5px;left:334.5px;transform:scaleY(1.1);transform-origin:0 9.79px;">OK</div>
<svg class="r" style="left:406px;top:585.5px" width="8" height="8" viewBox="0 0 8 8" stroke="#46403a" stroke-width="0.9" stroke-linecap="round"><path d="M1 7L7 1 M5.2 1H7V2.8" fill="none"/></svg>
<div class="t" style="top:580.25px;font-size:13.7px;line-height:18px;color:#ece4d6;font-weight:500;font-family:'Liberation Sans', sans-serif;left:446.5px;-webkit-text-stroke:0.25px #ece4d6;">data-gen-nested-split</div>
<div class="t" style="top:580.00px;font-size:13px;line-height:17px;color:#a89d8e;font-weight:400;font-family:'Liberation Sans', sans-serif;left:667px;">sample-app</div>
<div class="t" style="top:583.84px;font-size:10px;line-height:13px;color:#e0d8c8;font-weight:700;font-family:'Liberation Mono', monospace;left:820px;transform:scaleY(1.1);transform-origin:0 9.16px;">90799F47E6CD24D-00000000000029B4</div>
<div class="t" style="top:583.84px;font-size:10px;line-height:13px;color:#e0d8c8;font-weight:700;font-family:'Liberation Mono', monospace;left:1128px;transform:scaleY(1.1);transform-origin:0 9.16px;">2026-03-25 15:55:42</div>
<div class="t" style="top:583.07px;font-size:11px;line-height:14px;color:#e0574a;font-weight:400;font-family:'Liberation Mono', monospace;left:1326px;-webkit-text-stroke:0.2px #e0574a;transform:scaleY(1.1);transform-origin:0 9.93px;">2.42s</div>
<div class="r" style="left:1456px;top:587.0px;width:6px;height:6px;background:#5cc062;border-radius:3px;"></div>
<div class="t" style="top:583.57px;font-size:11px;line-height:14px;color:#d0c6b6;font-weight:400;font-family:'Liberation Mono', monospace;left:1467px;">sample-app-1</div>
<div class="r" style="left:306px;top:649.0px;width:1311px;height:1px;background:#28241f;"></div>
<div class="r" style="left:322.5px;top:626.0px;width:7px;height:7px;background:#5cc062;border-radius:3.5px;"></div>
<div class="t" style="top:623.21px;font-size:10.5px;line-height:14px;color:#e6dece;font-weight:700;font-family:'Liberation Mono', monospace;letter-spacing:-0.5px;left:334.5px;transform:scaleY(1.1);transform-origin:0 9.79px;">OK</div>
<svg class="r" style="left:406px;top:625.5px" width="8" height="8" viewBox="0 0 8 8" stroke="#46403a" stroke-width="0.9" stroke-linecap="round"><path d="M1 7L7 1 M5.2 1H7V2.8" fill="none"/></svg>
<div class="t" style="top:620.25px;font-size:13.7px;line-height:18px;color:#ece4d6;font-weight:500;font-family:'Liberation Sans', sans-serif;left:446.5px;-webkit-text-stroke:0.25px #ece4d6;">timer-heartbeat</div>
<div class="t" style="top:620.00px;font-size:13px;line-height:17px;color:#a89d8e;font-weight:400;font-family:'Liberation Sans', sans-serif;left:667px;">sample-app</div>
<div class="t" style="top:623.84px;font-size:10px;line-height:13px;color:#e0d8c8;font-weight:700;font-family:'Liberation Mono', monospace;left:820px;transform:scaleY(1.1);transform-origin:0 9.16px;">90799F47E6CD24D-00000000000029B3</div>
<div class="t" style="top:623.84px;font-size:10px;line-height:13px;color:#e0d8c8;font-weight:700;font-family:'Liberation Mono', monospace;left:1128px;transform:scaleY(1.1);transform-origin:0 9.16px;">2026-03-25 15:55:39</div>
<div class="t" style="top:623.07px;font-size:11px;line-height:14px;color:#e0574a;font-weight:400;font-family:'Liberation Mono', monospace;left:1326px;-webkit-text-stroke:0.2px #e0574a;transform:scaleY(1.1);transform-origin:0 9.93px;">501ms</div>
<div class="r" style="left:1456px;top:627.0px;width:6px;height:6px;background:#5cc062;border-radius:3px;"></div>
<div class="t" style="top:623.57px;font-size:11px;line-height:14px;color:#d0c6b6;font-weight:400;font-family:'Liberation Mono', monospace;left:1467px;">sample-app-1</div>
<div class="r" style="left:306px;top:689.0px;width:1311px;height:1px;background:#28241f;"></div>
<div class="r" style="left:322.5px;top:666.0px;width:7px;height:7px;background:#5cc062;border-radius:3.5px;"></div>
<div class="t" style="top:663.21px;font-size:10.5px;line-height:14px;color:#e6dece;font-weight:700;font-family:'Liberation Mono', monospace;letter-spacing:-0.5px;left:334.5px;transform:scaleY(1.1);transform-origin:0 9.79px;">OK</div>
<svg class="r" style="left:406px;top:665.5px" width="8" height="8" viewBox="0 0 8 8" stroke="#46403a" stroke-width="0.9" stroke-linecap="round"><path d="M1 7L7 1 M5.2 1H7V2.8" fill="none"/></svg>
<div class="t" style="top:660.25px;font-size:13.7px;line-height:18px;color:#ece4d6;font-weight:500;font-family:'Liberation Sans', sans-serif;left:446.5px;-webkit-text-stroke:0.25px #ece4d6;">data-gen-orders</div>
<div class="t" style="top:660.00px;font-size:13px;line-height:17px;color:#a89d8e;font-weight:400;font-family:'Liberation Sans', sans-serif;left:667px;">sample-app</div>
<div class="t" style="top:663.84px;font-size:10px;line-height:13px;color:#e0d8c8;font-weight:700;font-family:'Liberation Mono', monospace;left:820px;transform:scaleY(1.1);transform-origin:0 9.16px;">90799F47E6CD24D-00000000000029B2</div>
<div class="t" style="top:663.84px;font-size:10px;line-height:13px;color:#e0d8c8;font-weight:700;font-family:'Liberation Mono', monospace;left:1128px;transform:scaleY(1.1);transform-origin:0 9.16px;">2026-03-25 15:55:38</div>
<div class="t" style="top:663.07px;font-size:11px;line-height:14px;color:#e0574a;font-weight:400;font-family:'Liberation Mono', monospace;left:1326px;-webkit-text-stroke:0.2px #e0574a;transform:scaleY(1.1);transform-origin:0 9.93px;">738ms</div>
<div class="r" style="left:1456px;top:667.0px;width:6px;height:6px;background:#5cc062;border-radius:3px;"></div>
<div class="t" style="top:663.57px;font-size:11px;line-height:14px;color:#d0c6b6;font-weight:400;font-family:'Liberation Mono', monospace;left:1467px;">sample-app-1</div>
<div class="r" style="left:306px;top:729.0px;width:1311px;height:1px;background:#28241f;"></div>
<div class="r" style="left:322.5px;top:706.0px;width:7px;height:7px;background:#5cc062;border-radius:3.5px;"></div>
<div class="t" style="top:703.21px;font-size:10.5px;line-height:14px;color:#e6dece;font-weight:700;font-family:'Liberation Mono', monospace;letter-spacing:-0.5px;left:334.5px;transform:scaleY(1.1);transform-origin:0 9.79px;">OK</div>
<svg class="r" style="left:406px;top:705.5px" width="8" height="8" viewBox="0 0 8 8" stroke="#46403a" stroke-width="0.9" stroke-linecap="round"><path d="M1 7L7 1 M5.2 1H7V2.8" fill="none"/></svg>
<div class="t" style="top:700.25px;font-size:13.7px;line-height:18px;color:#ece4d6;font-weight:500;font-family:'Liberation Sans', sans-serif;left:446.5px;-webkit-text-stroke:0.25px #ece4d6;">file-processing</div>
<div class="t" style="top:700.00px;font-size:13px;line-height:17px;color:#a89d8e;font-weight:400;font-family:'Liberation Sans', sans-serif;left:667px;">sample-app</div>
<div class="t" style="top:703.84px;font-size:10px;line-height:13px;color:#e0d8c8;font-weight:700;font-family:'Liberation Mono', monospace;left:820px;transform:scaleY(1.1);transform-origin:0 9.16px;">90799F47E6CD24D-00000000000029B1</div>
<div class="t" style="top:703.84px;font-size:10px;line-height:13px;color:#e0d8c8;font-weight:700;font-family:'Liberation Mono', monospace;left:1128px;transform:scaleY(1.1);transform-origin:0 9.16px;">2026-03-25 15:55:38</div>
<div class="t" style="top:703.07px;font-size:11px;line-height:14px;color:#e0574a;font-weight:400;font-family:'Liberation Mono', monospace;left:1326px;-webkit-text-stroke:0.2px #e0574a;transform:scaleY(1.1);transform-origin:0 9.93px;">379ms</div>
<div class="r" style="left:1456px;top:707.0px;width:6px;height:6px;background:#5cc062;border-radius:3px;"></div>
<div class="t" style="top:703.57px;font-size:11px;line-height:14px;color:#d0c6b6;font-weight:400;font-family:'Liberation Mono', monospace;left:1467px;">sample-app-1</div>
<div class="r" style="left:306px;top:769.0px;width:1311px;height:1px;background:#28241f;"></div>
<div class="r" style="left:322.5px;top:746.0px;width:7px;height:7px;background:#5cc062;border-radius:3.5px;"></div>
<div class="t" style="top:743.21px;font-size:10.5px;line-height:14px;color:#e6dece;font-weight:700;font-family:'Liberation Mono', monospace;letter-spacing:-0.5px;left:334.5px;transform:scaleY(1.1);transform-origin:0 9.79px;">OK</div>
<svg class="r" style="left:406px;top:745.5px" width="8" height="8" viewBox="0 0 8 8" stroke="#46403a" stroke-width="0.9" stroke-linecap="round"><path d="M1 7L7 1 M5.2 1H7V2.8" fill="none"/></svg>
<div class="t" style="top:740.25px;font-size:13.7px;line-height:18px;color:#ece4d6;font-weight:500;font-family:'Liberation Sans', sans-serif;left:446.5px;-webkit-text-stroke:0.25px #ece4d6;">data-gen-files</div>
<div class="t" style="top:740.00px;font-size:13px;line-height:17px;color:#a89d8e;font-weight:400;font-family:'Liberation Sans', sans-serif;left:667px;">sample-app</div>
<div class="t" style="top:743.84px;font-size:10px;line-height:13px;color:#e0d8c8;font-weight:700;font-family:'Liberation Mono', monospace;left:820px;transform:scaleY(1.1);transform-origin:0 9.16px;">90799F47E6CD24D-00000000000029B0</div>
<div class="t" style="top:743.84px;font-size:10px;line-height:13px;color:#e0d8c8;font-weight:700;font-family:'Liberation Mono', monospace;left:1128px;transform:scaleY(1.1);transform-origin:0 9.16px;">2026-03-25 15:55:37</div>
<div class="t" style="top:743.07px;font-size:11px;line-height:14px;color:#5cc062;font-weight:400;font-family:'Liberation Mono', monospace;left:1326px;-webkit-text-stroke:0.2px #5cc062;transform:scaleY(1.1);transform-origin:0 9.93px;">1ms</div>
<div class="r" style="left:1456px;top:747.0px;width:6px;height:6px;background:#5cc062;border-radius:3px;"></div>
<div class="t" style="top:743.57px;font-size:11px;line-height:14px;color:#d0c6b6;font-weight:400;font-family:'Liberation Mono', monospace;left:1467px;">sample-app-1</div>
<div class="r" style="left:306px;top:809.0px;width:1311px;height:1px;background:#28241f;"></div>
<div class="r" style="left:322.5px;top:786.0px;width:7px;height:7px;background:#5cc062;border-radius:3.5px;"></div>
<div class="t" style="top:783.21px;font-size:10.5px;line-height:14px;color:#e6dece;font-weight:700;font-family:'Liberation Mono', monospace;letter-spacing:-0.5px;left:334.5px;transform:scaleY(1.1);transform-origin:0 9.79px;">OK</div>
<svg class="r" style="left:406px;top:785.5px" width="8" height="8" viewBox="0 0 8 8" stroke="#46403a" stroke-width="0.9" stroke-linecap="round"><path d="M1 7L7 1 M5.2 1H7V2.8" fill="none"/></svg>
<div class="t" style="top:780.25px;font-size:13.7px;line-height:18px;color:#ece4d6;font-weight:500;font-family:'Liberation Sans', sans-serif;left:446.5px;-webkit-text-stroke:0.25px #ece4d6;">route3</div>
<div class="t" style="top:780.00px;font-size:13px;line-height:17px;color:#a89d8e;font-weight:400;font-family:'Liberation Sans', sans-serif;left:667px;">backend-app</div>
<div class="t" style="top:783.84px;font-size:10px;line-height:13px;color:#e0d8c8;font-weight:700;font-family:'Liberation Mono', monospace;left:820px;transform:scaleY(1.1);transform-origin:0 9.16px;">EE7322370A10617-00000000000006D1</div>
<div class="t" style="top:783.84px;font-size:10px;line-height:13px;color:#e0d8c8;font-weight:700;font-family:'Liberation Mono', monospace;left:1128px;transform:scaleY(1.1);transform-origin:0 9.16px;">2026-03-25 15:55:36</div>
<div class="t" style="top:783.07px;font-size:11px;line-height:14px;color:#5cc062;font-weight:400;font-family:'Liberation Mono', monospace;left:1326px;-webkit-text-stroke:0.2px #5cc062;transform:scaleY(1.1);transform-origin:0 9.93px;">23ms</div>
<div class="r" style="left:1456px;top:787.0px;width:6px;height:6px;background:#5cc062;border-radius:3px;"></div>
<div class="t" style="top:783.57px;font-size:11px;line-height:14px;color:#d0c6b6;font-weight:400;font-family:'Liberation Mono', monospace;left:1467px;">backend-app-1</div>
<div class="r" style="left:306px;top:849.0px;width:1311px;height:1px;background:#28241f;"></div>
<div class="r" style="left:322.5px;top:826.0px;width:7px;height:7px;background:#5cc062;border-radius:3.5px;"></div>
<div class="t" style="top:823.21px;font-size:10.5px;line-height:14px;color:#e6dece;font-weight:700;font-family:'Liberation Mono', monospace;letter-spacing:-0.5px;left:334.5px;transform:scaleY(1.1);transform-origin:0 9.79px;">OK</div>
<svg class="r" style="left:406px;top:825.5px" width="8" height="8" viewBox="0 0 8 8" stroke="#46403a" stroke-width="0.9" stroke-linecap="round"><path d="M1 7L7 1 M5.2 1H7V2.8" fill="none"/></svg>
<div class="t" style="top:820.25px;font-size:13.7px;line-height:18px;color:#ece4d6;font-weight:500;font-family:'Liberation Sans', sans-serif;left:446.5px;-webkit-text-stroke:0.25px #ece4d6;">route2</div>
<div class="t" style="top:820.00px;font-size:13px;line-height:17px;color:#a89d8e;font-weight:400;font-family:'Liberation Sans', sans-serif;left:667px;">backend-app</div>
<div class="t" style="top:823.84px;font-size:10px;line-height:13px;color:#e0d8c8;font-weight:700;font-family:'Liberation Mono', monospace;left:820px;transform:scaleY(1.1);transform-origin:0 9.16px;">EE7322370A10617-00000000000006D0</div>
<div class="t" style="top:823.84px;font-size:10px;line-height:13px;color:#e0d8c8;font-weight:700;font-family:'Liberation Mono', monospace;left:1128px;transform:scaleY(1.1);transform-origin:0 9.16px;">2026-03-25 15:55:35</div>
<div class="t" style="top:823.07px;font-size:11px;line-height:14px;color:#5cc062;font-weight:400;font-family:'Liberation Mono', monospace;left:1326px;-webkit-text-stroke:0.2px #5cc062;transform:scaleY(1.1);transform-origin:0 9.93px;">85ms</div>
<div class="r" style="left:1456px;top:827.0px;width:6px;height:6px;background:#5cc062;border-radius:3px;"></div>
<div class="t" style="top:823.57px;font-size:11px;line-height:14px;color:#d0c6b6;font-weight:400;font-family:'Liberation Mono', monospace;left:1467px;">backend-app-1</div>
<div class="r" style="left:306px;top:889.0px;width:1311px;height:1px;background:#28241f;"></div>
<div class="r" style="left:322.5px;top:866.0px;width:7px;height:7px;background:#5cc062;border-radius:3.5px;"></div>
<div class="t" style="top:863.21px;font-size:10.5px;line-height:14px;color:#e6dece;font-weight:700;font-family:'Liberation Mono', monospace;letter-spacing:-0.5px;left:334.5px;transform:scaleY(1.1);transform-origin:0 9.79px;">OK</div>
<svg class="r" style="left:406px;top:865.5px" width="8" height="8" viewBox="0 0 8 8" stroke="#46403a" stroke-width="0.9" stroke-linecap="round"><path d="M1 7L7 1 M5.2 1H7V2.8" fill="none"/></svg>
<div class="t" style="top:860.25px;font-size:13.7px;line-height:18px;color:#ece4d6;font-weight:500;font-family:'Liberation Sans', sans-serif;left:446.5px;-webkit-text-stroke:0.25px #ece4d6;">route1</div>
<div class="t" style="top:860.00px;font-size:13px;line-height:17px;color:#a89d8e;font-weight:400;font-family:'Liberation Sans', sans-serif;left:667px;">backend-app</div>
<div class="t" style="top:863.84px;font-size:10px;line-height:13px;color:#e0d8c8;font-weight:700;font-family:'Liberation Mono', monospace;left:820px;transform:scaleY(1.1);transform-origin:0 9.16px;">EE7322370A10617-00000000000006CF</div>
<div class="t" style="top:863.84px;font-size:10px;line-height:13px;color:#e0d8c8;font-weight:700;font-family:'Liberation Mono', monospace;left:1128px;transform:scaleY(1.1);transform-origin:0 9.16px;">2026-03-25 15:55:35</div>
<div class="t" style="top:863.07px;font-size:11px;line-height:14px;color:#bfb4a4;font-weight:400;font-family:'Liberation Mono', monospace;left:1326px;-webkit-text-stroke:0.2px #bfb4a4;transform:scaleY(1.1);transform-origin:0 9.93px;">109ms</div>
<div class="r" style="left:1456px;top:867.0px;width:6px;height:6px;background:#5cc062;border-radius:3px;"></div>
<div class="t" style="top:863.57px;font-size:11px;line-height:14px;color:#d0c6b6;font-weight:400;font-family:'Liberation Mono', monospace;left:1467px;">backend-app-1</div>
<div class="r" style="left:306px;top:929.0px;width:1311px;height:1px;background:#28241f;"></div>
<div class="r" style="left:322.5px;top:906.0px;width:7px;height:7px;background:#5cc062;border-radius:3.5px;"></div>
<div class="t" style="top:903.21px;font-size:10.5px;line-height:14px;color:#e6dece;font-weight:700;font-family:'Liberation Mono', monospace;letter-spacing:-0.5px;left:334.5px;transform:scaleY(1.1);transform-origin:0 9.79px;">OK</div>
<svg class="r" style="left:406px;top:905.5px" width="8" height="8" viewBox="0 0 8 8" stroke="#46403a" stroke-width="0.9" stroke-linecap="round"><path d="M1 7L7 1 M5.2 1H7V2.8" fill="none"/></svg>
<div class="t" style="top:900.25px;font-size:13.7px;line-height:18px;color:#ece4d6;font-weight:500;font-family:'Liberation Sans', sans-serif;left:446.5px;-webkit-text-stroke:0.25px #ece4d6;">product-caller</div>
<div class="t" style="top:900.00px;font-size:13px;line-height:17px;color:#a89d8e;font-weight:400;font-family:'Liberation Sans', sans-serif;left:667px;">caller-app</div>
<div class="t" style="top:903.84px;font-size:10px;line-height:13px;color:#e0d8c8;font-weight:700;font-family:'Liberation Mono', monospace;left:820px;transform:scaleY(1.1);transform-origin:0 9.16px;">69AC90BF8EBC4F9-0000000000000442</div>
<div class="t" style="top:903.84px;font-size:10px;line-height:13px;color:#e0d8c8;font-weight:700;font-family:'Liberation Mono', monospace;left:1128px;transform:scaleY(1.1);transform-origin:0 9.16px;">2026-03-25 15:55:35</div>
<div class="t" style="top:903.07px;font-size:11px;line-height:14px;color:#e3a02a;font-weight:400;font-family:'Liberation Mono', monospace;left:1326px;-webkit-text-stroke:0.2px #e3a02a;transform:scaleY(1.1);transform-origin:0 9.93px;">221ms</div>
<div class="r" style="left:1456px;top:907.0px;width:6px;height:6px;background:#5cc062;border-radius:3px;"></div>
<div class="t" style="top:903.57px;font-size:11px;line-height:14px;color:#d0c6b6;font-weight:400;font-family:'Liberation Mono', monospace;left:1467px;">caller-app-1</div>
<div class="r" style="left:306px;top:969.0px;width:1311px;height:1px;background:#28241f;"></div>
<div class="r" style="left:322.5px;top:946.0px;width:7px;height:7px;background:#5cc062;border-radius:3.5px;"></div>
<div class="t" style="top:943.21px;font-size:10.5px;line-height:14px;color:#e6dece;font-weight:700;font-family:'Liberation Mono', monospace;letter-spacing:-0.5px;left:334.5px;transform:scaleY(1.1);transform-origin:0 9.79px;">OK</div>
<svg class="r" style="left:406px;top:945.5px" width="8" height="8" viewBox="0 0 8 8" stroke="#46403a" stroke-width="0.9" stroke-linecap="round"><path d="M1 7L7 1 M5.2 1H7V2.8" fill="none"/></svg>
<div class="t" style="top:940.25px;font-size:13.7px;line-height:18px;color:#ece4d6;font-weight:500;font-family:'Liberation Sans', sans-serif;left:446.5px;-webkit-text-stroke:0.25px #ece4d6;">timer-heartbeat</div>
<div class="t" style="top:940.00px;font-size:13px;line-height:17px;color:#a89d8e;font-weight:400;font-family:'Liberation Sans', sans-serif;left:667px;">sample-app</div>
<div class="t" style="top:943.84px;font-size:10px;line-height:13px;color:#e0d8c8;font-weight:700;font-family:'Liberation Mono', monospace;left:820px;transform:scaleY(1.1);transform-origin:0 9.16px;">90799F47E6CD24D-00000000000029AF</div>
<div class="t" style="top:943.84px;font-size:10px;line-height:13px;color:#e0d8c8;font-weight:700;font-family:'Liberation Mono', monospace;left:1128px;transform:scaleY(1.1);transform-origin:0 9.16px;">2026-03-25 15:55:34</div>
<div class="t" style="top:943.07px;font-size:11px;line-height:14px;color:#e0574a;font-weight:400;font-family:'Liberation Mono', monospace;left:1326px;-webkit-text-stroke:0.2px #e0574a;transform:scaleY(1.1);transform-origin:0 9.93px;">482ms</div>
<div class="r" style="left:1456px;top:947.0px;width:6px;height:6px;background:#5cc062;border-radius:3px;"></div>
<div class="t" style="top:943.57px;font-size:11px;line-height:14px;color:#d0c6b6;font-weight:400;font-family:'Liberation Mono', monospace;left:1467px;">sample-app-1</div>
<div class="r" style="left:1199px;top:927px;width:100px;height:26px;background:rgba(31,28,24,0.99);border:1px solid #2c2823;box-sizing:border-box;border-radius:7px;"></div>
<div class="r" style="left:1207px;top:931px;width:46px;height:18px;background:#2a2622;border:1px solid #35302a;box-sizing:border-box;border-radius:4px;"></div>
<div class="t" style="top:934.26px;font-size:10.3px;line-height:13px;color:#a89d8c;font-weight:700;font-family:'Liberation Mono', monospace;right:438.0px;left:1207px;width:46px;text-align:center;">Ctrl+K</div>
<div class="t" style="top:933.47px;font-size:10.2px;line-height:13px;color:#6b6259;font-weight:400;font-family:'Liberation Sans', sans-serif;left:1258px;">Search</div>
<div class="r" style="left:1309px;top:927px;width:108px;height:26px;background:rgba(31,28,24,0.99);border:1px solid #2c2823;box-sizing:border-box;border-radius:7px;"></div>
<div class="r" style="left:1317px;top:931px;width:22px;height:18px;background:#2a2622;border:1px solid #35302a;box-sizing:border-box;border-radius:4px;"></div>
<svg class="r" style="left:1321px;top:934px" width="14" height="12" viewBox="0 0 14 12" fill="none" stroke="#a89d8c" stroke-width="1.5" stroke-linecap="round" stroke-linejoin="round"><path d="M4 11V1.5 M1 4.5L4 1.5L7 4.5 M10 1V10.5 M7 7.5L10 10.5L13 7.5"/></svg>
<div class="t" style="top:933.47px;font-size:10.2px;line-height:13px;color:#6b6259;font-weight:400;font-family:'Liberation Sans', sans-serif;left:1344px;">Navigate rows</div>
<div class="r" style="left:1427px;top:927px;width:115px;height:26px;background:rgba(31,28,24,0.99);border:1px solid #2c2823;box-sizing:border-box;border-radius:7px;"></div>
<div class="r" style="left:1435px;top:931px;width:40px;height:18px;background:#2a2622;border:1px solid #35302a;box-sizing:border-box;border-radius:4px;"></div>
<div class="t" style="top:934.26px;font-size:10.3px;line-height:13px;color:#a89d8c;font-weight:700;font-family:'Liberation Mono', monospace;right:213.0px;left:1435px;width:40px;text-align:center;">Enter</div>
<div class="t" style="top:933.47px;font-size:10.2px;line-height:13px;color:#6b6259;font-weight:400;font-family:'Liberation Sans', sans-serif;left:1480px;">Open detail</div>
<div class="r" style="left:1552px;top:927px;width:104px;height:26px;background:rgba(31,28,24,0.99);border:1px solid #2c2823;box-sizing:border-box;border-radius:7px;"></div>
<div class="r" style="left:1560.5px;top:931px;width:27.5px;height:18px;background:#2a2622;border:1px solid #35302a;box-sizing:border-box;border-radius:4px;"></div>
<div class="t" style="top:934.26px;font-size:10.3px;line-height:13px;color:#a89d8c;font-weight:700;font-family:'Liberation Mono', monospace;right:93.75px;left:1560.5px;width:27.5px;text-align:center;">Esc</div>
<div class="t" style="top:933.47px;font-size:10.2px;line-height:13px;color:#6b6259;font-weight:400;font-family:'Liberation Sans', sans-serif;left:1593px;">Close panel</div>
</body></html>
